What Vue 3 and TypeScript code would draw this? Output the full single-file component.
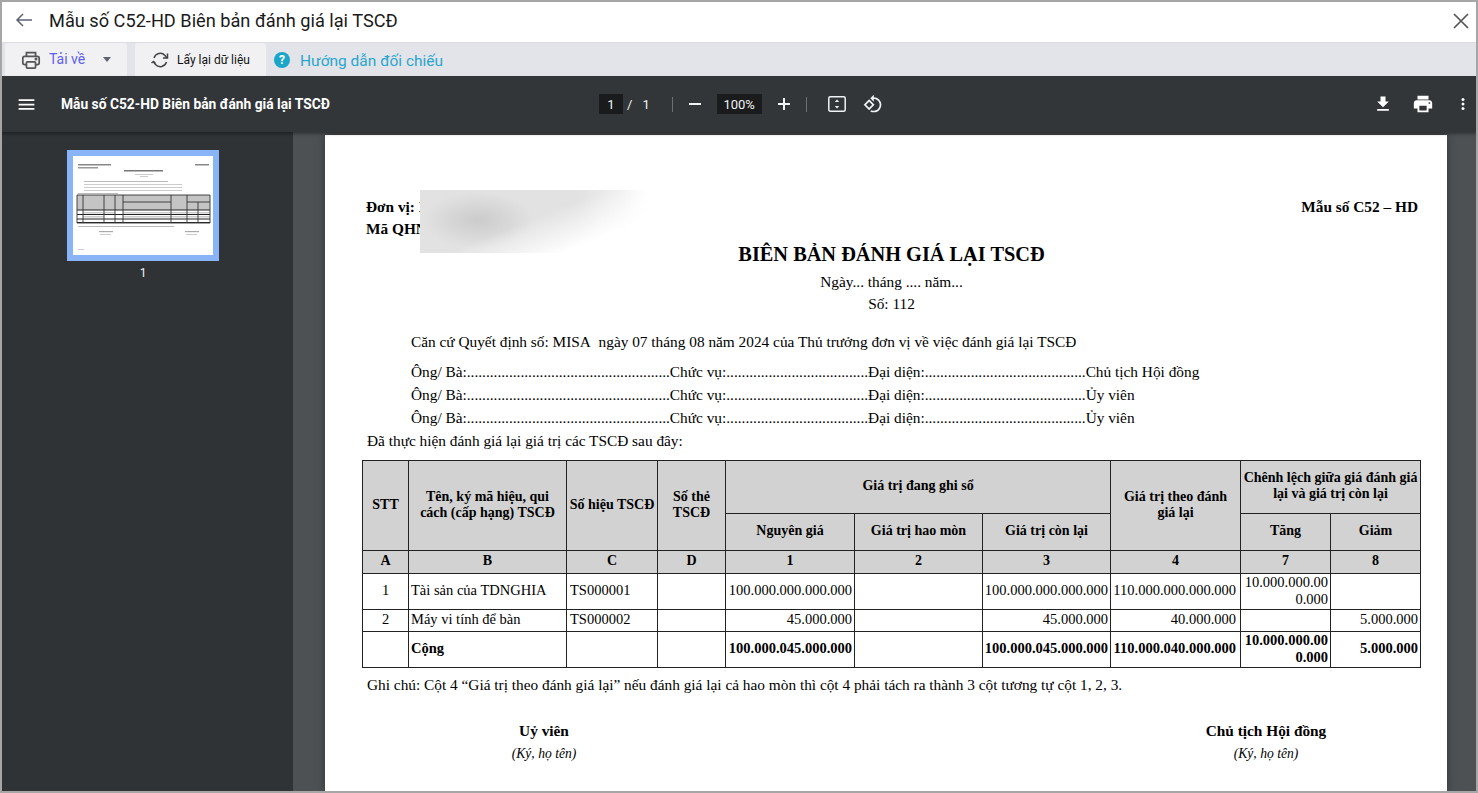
<script setup lang="ts">
const signers = ['Chủ tịch Hội đồng', 'Ủy viên', 'Ủy viên']
const dot = (n: number) => '.'.repeat(n)
const line = (role: string) => `Ông/ Bà:${dot(53)}Chức vụ:${dot(37)}Đại diện:${dot(42)}${role}`
const lines = signers.map(line)
</script>

<template>
  <div class="frame">
    <header class="title-bar">
      <svg class="back" width="20" height="20" viewBox="0 0 20 20"><path d="M18 10H3M9 4l-6 6 6 6" fill="none" stroke="#5d6375" stroke-width="1.5"/></svg>
      <h1>Mẫu số C52-HD Biên bản đánh giá lại TSCĐ</h1>
      <svg class="close" width="18" height="18" viewBox="0 0 18 18"><path d="M2 2l14 14M16 2L2 16" fill="none" stroke="#555" stroke-width="1.7"/></svg>
    </header>

    <nav class="tools">
      <div class="tool tool-print">
        <svg width="20" height="20" viewBox="0 0 22 22" fill="none" stroke="#555" stroke-width="1.9"><path d="M6 7V3h10v4M6 16H4a2 2 0 0 1-2-2v-5a2 2 0 0 1 2-2h14a2 2 0 0 1 2 2v5a2 2 0 0 1-2 2h-2"/><rect x="6" y="13" width="10" height="7" rx="1"/><circle cx="16.5" cy="10" r=".7" fill="#555"/></svg>
        <span class="tai">Tải về</span>
        <i class="caret"></i>
      </div>
      <div class="tool tool-sync">
        <svg width="20" height="20" viewBox="0 0 20 20" fill="none" stroke="#444" stroke-width="1.5"><path d="M4 8a6.5 6.5 0 0 1 11-2.5L17 8M16.500 12a6.500 6.500 0 0 1-11 2.500L3.500 12"/><path d="M17.500 3.500V8h-4.500M1.500 13l2-1.500 2 2" /></svg>
        <span>Lấy lại dữ liệu</span>
      </div>
      <div class="help">
        <span class="help-ic">?</span>
        <span class="help-text">Hướng dẫn đối chiếu</span>
      </div>
    </nav>

    <div class="viewer-bar">
      <div class="vb-left">
        <svg width="21" height="21" viewBox="0 0 24 24" fill="#fff"><path d="M3 18h18v-2H3v2zm0-5h18v-2H3v2zm0-7v2h18V6H3z"/></svg>
        <span class="doc-name">Mẫu số C52-HD Biên bản đánh giá lại TSCĐ</span>
      </div>
      <div class="vb-center">
        <span class="field page-f">1</span>
        <span class="sl">/</span>
        <span class="tot">1</span>
        <i class="sep"></i>
        <svg width="24" height="24" viewBox="0 0 24 24" fill="#f1f3f4"><path d="M6 11h12v2H6z"/></svg>
        <span class="field zoom-f">100%</span>
        <svg width="24" height="24" viewBox="0 0 24 24" fill="#f1f3f4"><path d="M18 13h-5v5h-2v-5H6v-2h5V6h2v5h5z"/></svg>
        <i class="sep sep2"></i>
        <svg width="24" height="24" viewBox="0 0 24 24" fill="none"><rect x="3.800" y="4.800" width="16.400" height="14.400" rx="1.500" stroke="#f1f3f4" stroke-width="1.500"/><path d="M12 7.500l2.200 2.500H9.800zM12 16.500L9.800 14h4.400z" fill="#f1f3f4"/></svg>
        <svg class="rot" width="20" height="20" viewBox="0 0 24 24" fill="#f1f3f4"><path d="M7.340 6.410L.86 12.900l6.490 6.480 6.490-6.480-6.500-6.490zM3.690 12.900l3.660-3.660L11 12.900l-3.660 3.660-3.650-3.660zm15.670-6.260C17.610 4.880 15.300 4 13 4V.76L8.760 5 13 9.240V6c1.790 0 3.580.68 4.950 2.050 2.730 2.730 2.730 7.170 0 9.900C16.580 19.320 14.790 20 13 20c-.97 0-1.940-.21-2.840-.61l-1.490 1.490C10.020 21.620 11.510 22 13 22c2.300 0 4.610-.88 6.360-2.640 3.520-3.510 3.520-9.210 0-12.720z"/></svg>
      </div>
      <div class="vb-right">
        <svg width="20" height="20" viewBox="0 0 24 24" fill="#fff"><path d="M19 9h-4V3H9v6H5l7 7 7-7zM5 18v2h14v-2H5z"/></svg>
        <svg width="22" height="22" viewBox="0 0 24 24" fill="#fff"><path d="M19 8H5c-1.660 0-3 1.340-3 3v6h4v4h12v-4h4v-6c0-1.660-1.340-3-3-3zm-3 11H8v-5h8v5zm3-7c-.55 0-1-.45-1-1s.45-1 1-1 1 .45 1 1-.45 1-1 1zm-1-9H6v4h12V3z"/></svg>
        <svg width="20" height="20" viewBox="0 0 24 24" fill="#fff"><circle cx="12" cy="6.500" r="1.800"/><circle cx="12" cy="12" r="1.800"/><circle cx="12" cy="17.500" r="1.800"/></svg>
      </div>
    </div>

    <div class="body">
      <aside class="side">
        <div class="thumb">
          <svg class="thumb-svg" width="140" height="99" viewBox="0 0 140 99">
            <g class="bl">
              <rect x="5" y="8" width="33" height="1.500" fill="#888"/><rect x="122" y="8" width="14" height="1.500" fill="#888"/>
              <rect x="5" y="11" width="20" height="1.500" fill="#999"/><rect x="51" y="14" width="39" height="1.500" fill="#777"/>
              <rect x="62" y="18" width="18" height="1" fill="#ccc"/><rect x="67" y="20" width="8" height="1" fill="#ccc"/>
              <rect x="11" y="25" width="84" height="1" fill="#bbb"/>
              <rect x="11" y="28" width="98" height="1" fill="#ccc"/><rect x="11" y="31" width="98" height="1" fill="#ccc"/><rect x="11" y="34" width="98" height="1" fill="#ccc"/>
              <rect x="5" y="37" width="40" height="1" fill="#bbb"/>
              <rect x="4" y="39" width="133" height="15" fill="#c4c4c4"/>
              <rect x="10" y="56" width="21" height="1.500" fill="#ccc"/><rect x="31" y="56" width="11" height="1.500" fill="#ccc"/>
              <rect x="50" y="56" width="87" height="1.500" fill="#ccc"/>
              <rect x="10" y="60" width="21" height="1.500" fill="#ccc"/><rect x="50" y="60" width="87" height="1.500" fill="#ccc"/>
              <path v-for="y in [54, 58.500, 63, 66.500]" :key="y" :d="`M4 ${y}H137`" stroke="#222" stroke-width="1"/>
              <path d="M4 39H137V67H4ZM10 39V67M31 39V67M42 39V67M50 39V67M98 39V67M114 39V67M125 46V67M50 46H98M114 46H137" stroke="#333" stroke-width=".9" fill="none"/>
              <rect x="5" y="70" width="96" height="1" fill="#bbb"/>
              <rect v-for="x in [26, 112]" :key="x" :x="x" y="75" width="14" height="1.200" fill="#aaa"/>
              <rect v-for="x in [27, 113]" :key="x + 1" :x="x" y="78" width="11" height="1" fill="#ccc"/>
              <rect x="5" y="93" width="6" height="1" fill="#ccc"/>
            </g>
          </svg>
        </div>
        <span class="thumb-num">1</span>
      </aside>

      <main class="stage">
        <section class="paper">
          <div class="head-row">
            <div class="org">
              <div class="org-l">Đơn vị: X</div>
              <div class="org-l">Mã QHNS</div>
            </div>
            <div class="form-no">Mẫu số C52 – HD</div>
          </div>
          <div class="smudge"></div>
          <h2>BIÊN BẢN ĐÁNH GIÁ LẠI TSCĐ</h2>
          <p class="c date">Ngày... tháng .... năm...</p>
          <p class="c no">Số: 112</p>
          <p class="basis">Căn cứ Quyết định số: MISA&nbsp; ngày 07 tháng 08 năm 2024 của Thủ trưởng đơn vị về việc đánh giá lại TSCĐ</p>
          <div class="people">
            <p v-for="(l, i) in lines" :key="i">{{ l }}</p>
          </div>
          <p class="done">Đã thực hiện đánh giá lại giá trị các TSCĐ sau đây:</p>

          <table>
            <colgroup>
              <col class="w46"><col class="w158"><col class="w91"><col class="w68"><col class="w129"><col class="w128"><col class="w128"><col class="w130"><col class="w90"><col class="w90">
            </colgroup>
            <thead>
              <tr class="r1">
                <th rowspan="2">STT</th>
                <th rowspan="2">Tên, ký mã hiệu, qui<br>cách (cấp hạng) TSCĐ</th>
                <th rowspan="2" class="nw">Số hiệu TSCĐ</th>
                <th rowspan="2">Số thẻ<br>TSCĐ</th>
                <th colspan="3">Giá trị đang ghi sổ</th>
                <th rowspan="2">Giá trị theo đánh<br>giá lại</th>
                <th colspan="2" class="nw">Chênh lệch giữa giá đánh giá<br>lại và giá trị còn lại</th>
              </tr>
              <tr class="r2">
                <th>Nguyên giá</th><th>Giá trị hao mòn</th><th>Giá trị còn lại</th><th>Tăng</th><th>Giảm</th>
              </tr>
              <tr class="r3">
                <th>A</th><th>B</th><th>C</th><th>D</th><th>1</th><th>2</th><th>3</th><th>4</th><th>7</th><th>8</th>
              </tr>
            </thead>
            <tbody>
              <tr class="r4">
                <td class="ctr">1</td><td class="name">Tài sản của TDNGHIA</td><td>TS000001</td><td></td>
                <td class="num">100.000.000.000.000</td><td></td><td class="num">100.000.000.000.000</td><td class="num col4">110.000.000.000.000</td>
                <td class="num wrap">10.000.000.00<br>0.000</td><td></td>
              </tr>
              <tr class="r5">
                <td class="ctr">2</td><td class="name">Máy vi tính để bàn</td><td>TS000002</td><td></td>
                <td class="num">45.000.000</td><td></td><td class="num">45.000.000</td><td class="num col4">40.000.000</td>
                <td></td><td class="num">5.000.000</td>
              </tr>
              <tr class="r6">
                <td></td><td class="b name">Cộng</td><td></td><td></td>
                <td class="num b">100.000.045.000.000</td><td></td><td class="num b">100.000.045.000.000</td><td class="num b col4">110.000.040.000.000</td>
                <td class="num b wrap">10.000.000.00<br>0.000</td><td class="num b">5.000.000</td>
              </tr>
            </tbody>
          </table>

          <p class="note">Ghi chú: Cột 4 “Giá trị theo đánh giá lại” nếu đánh giá lại cả hao mòn thì cột 4 phải tách ra thành 3 cột tương tự cột 1, 2, 3.</p>
          <div class="signs">
            <div class="sign s1"><strong>Uỷ viên</strong><em>(Ký, họ tên)</em></div>
            <div class="sign s2"><strong>Chủ tịch Hội đồng</strong><em>(Ký, họ tên)</em></div>
          </div>
        </section>
      </main>
    </div>
  </div>
</template>

<style scoped>
.frame {
  width: 1478px; height: 793px; box-sizing: border-box; overflow: hidden;
  border: 2px solid #a6a6a6; display: flex; flex-direction: column;
  font-family: Roboto, "Noto Sans", sans-serif; background: #fff;
}
.title-bar { height: 41px; box-sizing: border-box; padding-bottom: 4px; flex: none; display: flex; align-items: center; background: #fff; border-bottom: 1px solid #dcdde2; }
.back { margin-left: 12px; }
h1 { margin: 0 0 0 15px; font-size: 18.200px; font-weight: 400; color: #1a1a1a; flex: 1; }
.close { margin-right: 6px; margin-top: 2px; }
.tools { height: 33px; flex: none; background: #e3e4ea; display: flex; align-items: stretch; padding-left: 3px; }
.tool { background: #f1f1f4; border-radius: 3px 3px 0 0; display: flex; align-items: center; box-sizing: border-box; }
.tool-print { width: 122px; padding-left: 16px; }
.tai { color: #5d5ff0; font-size: 14px; margin-left: 8px; margin-top: -2px; }
.caret { border: 4.500px solid transparent; border-top: 5px solid #5f6270; border-bottom: 0; margin-left: 18px; }
.tool-sync { width: 131px; margin-left: 8px; padding-left: 15px; font-size: 12px; color: #111; }
.tool-sync span { margin-left: 7px; }
.help { display: flex; align-items: center; margin-left: 8px; }
.help-ic { width: 16px; height: 16px; border-radius: 50%; background: #1ba5c9; color: #fff; font-size: 12px; font-weight: 700; display: flex; align-items: center; justify-content: center; }
.help-text { color: #2ba6cc; font-size: 15.500px; margin-left: 10px; padding-top: 2px; }

.viewer-bar { height: 56px; flex: none; background: #323639; display: flex; align-items: center; position: relative; box-shadow: 0 2px 3px rgba(0,0,0,.35); z-index: 1; color: #f1f3f4; }
.vb-left { display: flex; align-items: center; padding-left: 14px; }
.doc-name { margin-left: 24px; font-size: 13.800px; font-weight: 700; color: #fff; }
.vb-center { position: absolute; left: 597px; top: 0; height: 100%; display: flex; align-items: center; font-size: 13px; }
.field { background: #191b1c; height: 20px; display: flex; align-items: center; justify-content: center; color: #f1f3f4; }
.page-f { width: 24px; }
.sl { margin-left: 4px; }
.tot { margin-left: 10px; }
.sep { width: 1px; height: 15px; background: #6d7073; margin: 0 10px 0 22px; }
.zoom-f { width: 45px; margin: 0 10px; }
.sep2 { margin: 0 18px 0 10px; }
.rot { margin-left: 14px; }
.vb-right { position: absolute; right: 3px; top: 0; height: 100%; display: flex; align-items: center; gap: 19px; }

.body { flex: 1; display: flex; min-height: 0; }
.side { width: 291px; flex: none; background: #2f3336; display: flex; flex-direction: column; align-items: center; box-sizing: border-box; padding: 18px 9px 0 0; }
.thumb { width: 152px; height: 111px; background: #8ab4f8; box-sizing: border-box; padding: 6px; }
.thumb-svg { display: block; background: #fff; }
.bl { filter: blur(.5px); }
.thumb-num { color: #f1f3f4; font-size: 12px; margin-top: 5px; }
.stage { flex: 1; background: #4d5154; padding: 3px 29px 0 32px; overflow: hidden; display: flex; }
.paper { width: 1122px; flex: none; background: #fff; padding: 61px 29px 0 37px; box-sizing: border-box; position: relative; font-family: "Liberation Serif", "Times New Roman", serif; font-size: 15.330px; color: #000; box-shadow: 0 0 8px rgba(0,0,0,.35); }
.paper p { margin: 0; }
.head-row { display: flex; justify-content: space-between; padding-left: 4px; font-weight: 700; font-size: 15.330px; line-height: 22px; }
.org { width: 200px; }
.org-l { white-space: nowrap; }
.smudge {
  position: absolute; left: 95px; top: 55px; width: 227px; height: 63px;
  background:
    linear-gradient(158deg, rgba(255,255,255,0) 48%, #fff 78%),
    radial-gradient(ellipse 55px 28px at 58px 30px, #cbcbcb, rgba(203,203,203,0)),
    linear-gradient(90deg, #e2e2e2 0, #e2e2e2 70%, #eff0ef 90%, #fff 100%);
}
h2 { margin: 1px 0 0; text-align: center; font-size: 20.330px; line-height: 26px; font-weight: 700; padding-left: 3px; }
.c { text-align: center; line-height: 22px; padding-left: 3px; }
.date { margin-top: 4px !important; }
.basis { margin: 16px 0 0 49px !important; line-height: 22px; }
.people { margin: 7px 0 0 49px; white-space: nowrap; line-height: 23px; }
.done { margin: 1px 0 8px 5px !important; line-height: 22px; }
table { table-layout: fixed; border-collapse: collapse; width: 1058px; font-size: 14.500px; }
.w46 { width: 46px; } .w158 { width: 158px; } .w91 { width: 91px; } .w68 { width: 68px; } .w129 { width: 129px; } .w128 { width: 128px; } .w130 { width: 130px; } .w90 { width: 90px; }
th, td { border: 1.500px solid #222; padding: 0 3px 3px; line-height: 18px; overflow: hidden; }
th { background: #d2d2d2; font-weight: 700; font-size: 14px; text-align: center; line-height: 16px; padding-bottom: 2px; }
.nw { white-space: nowrap; padding: 0 0 2px; }
.r1 { height: 53px; } .r2 { height: 37px; } .r3 { height: 23px; }
.r4 { height: 36px; } .r5 { height: 22px; } .r6 { height: 36px; }
.ctr { text-align: center; }
.name { padding-left: 2px; }
.num { text-align: right; white-space: nowrap; padding: 0 2px 3px 0; }
.col4 { padding-right: 4px; }
.wrap { line-height: 17px; padding-bottom: 1px; }
.b { font-weight: 700; }
.note { margin: 7px 0 0 5px !important; line-height: 20px; }
.signs { display: flex; justify-content: space-between; margin-top: 25px; }
.sign { display: flex; flex-direction: column; align-items: center; }
.sign strong { font-size: 15.330px; line-height: 22px; }
.sign em { font-size: 13.600px; line-height: 24px; }
.s1 { margin-left: 120px; width: 124px; }
.s2 { margin-right: 90px; width: 124px; }
</style>

<style>
html, body { margin: 0; }
</style>
